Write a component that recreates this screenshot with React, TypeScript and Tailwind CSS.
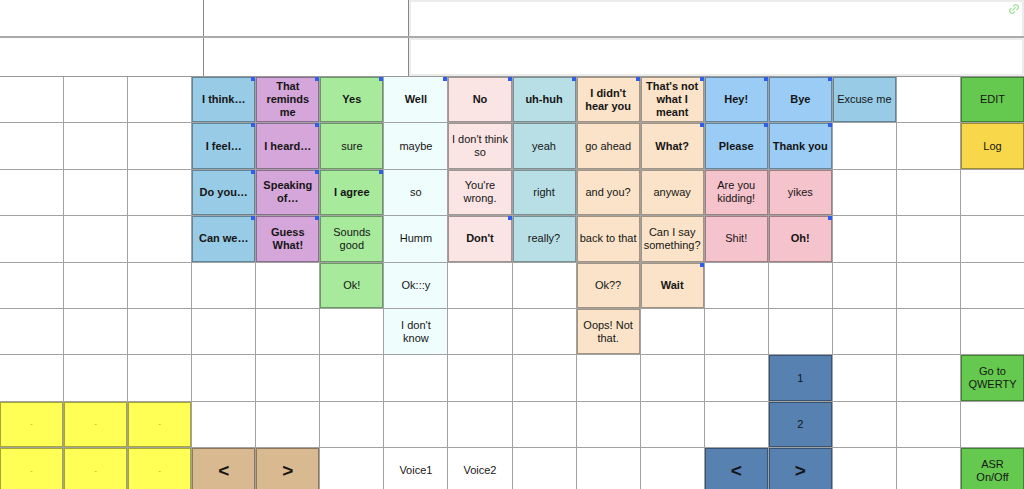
import { Link2 } from "lucide-react";

type Cell = { t: string; c: string; b?: boolean; big?: boolean; tiny?: boolean } | null;

// colour classes, written out in full
const BLUE = "bg-[#97cbe6]";
const PURPLE = "bg-[#d5a6da]";
const GREEN = "bg-[#a7ea9b]";
const AZURE = "bg-[#f0fdfd]";
const ROSE = "bg-[#fae4e4]";
const TEAL = "bg-[#b8dfe5]";
const PEACH = "bg-[#fae3c8]";
const SKY = "bg-[#9accf5]";
const PINK = "bg-[#f5c3cb]";
const LIME = "bg-[#66c94f]";
const GOLD = "bg-[#f8d84a]";
const YELLOW = "bg-[#ffff55]";
const TAN = "bg-[#d9b98f]";
const STEEL = "bg-[#5681b0]";
const WHITE = "bg-white";

const _ = null;
const y: Cell = { t: "-", c: YELLOW, tiny: true };

const rows: Cell[][] = [
  [_, _, _,
    { t: "I think…", c: BLUE, b: true },
    { t: "That reminds me", c: PURPLE, b: true },
    { t: "Yes", c: GREEN, b: true },
    { t: "Well", c: AZURE, b: true },
    { t: "No", c: ROSE, b: true },
    { t: "uh-huh", c: TEAL, b: true },
    { t: "I didn't hear you", c: PEACH, b: true },
    { t: "That's not what I meant", c: PEACH, b: true },
    { t: "Hey!", c: SKY, b: true },
    { t: "Bye", c: SKY, b: true },
    { t: "Excuse me", c: BLUE },
    _,
    { t: "EDIT", c: LIME }],
  [_, _, _,
    { t: "I feel…", c: BLUE, b: true },
    { t: "I heard…", c: PURPLE, b: true },
    { t: "sure", c: GREEN },
    { t: "maybe", c: AZURE },
    { t: "I don't think so", c: ROSE },
    { t: "yeah", c: TEAL },
    { t: "go ahead", c: PEACH },
    { t: "What?", c: PEACH, b: true },
    { t: "Please", c: SKY, b: true },
    { t: "Thank you", c: SKY, b: true },
    _, _,
    { t: "Log", c: GOLD }],
  [_, _, _,
    { t: "Do you…", c: BLUE, b: true },
    { t: "Speaking of…", c: PURPLE, b: true },
    { t: "I agree", c: GREEN, b: true },
    { t: "so", c: AZURE },
    { t: "You're wrong.", c: ROSE },
    { t: "right", c: TEAL },
    { t: "and you?", c: PEACH },
    { t: "anyway", c: PEACH },
    { t: "Are you kidding!", c: PINK },
    { t: "yikes", c: PINK },
    _, _, _],
  [_, _, _,
    { t: "Can we…", c: BLUE, b: true },
    { t: "Guess What!", c: PURPLE, b: true },
    { t: "Sounds good", c: GREEN },
    { t: "Humm", c: AZURE },
    { t: "Don't", c: ROSE, b: true },
    { t: "really?", c: TEAL },
    { t: "back to that", c: PEACH },
    { t: "Can I say something?", c: PEACH },
    { t: "Shit!", c: PINK },
    { t: "Oh!", c: PINK, b: true },
    _, _, _],
  [_, _, _, _, _,
    { t: "Ok!", c: GREEN },
    { t: "Ok:::y", c: AZURE },
    _, _,
    { t: "Ok??", c: PEACH },
    { t: "Wait", c: PEACH, b: true },
    _, _, _, _, _],
  [_, _, _, _, _, _,
    { t: "I don't\nknow", c: AZURE },
    _, _,
    { t: "Oops! Not that.", c: PEACH },
    _, _, _, _, _, _],
  [_, _, _, _, _, _, _, _, _, _, _, _,
    { t: "1", c: STEEL },
    _, _,
    { t: "Go to QWERTY", c: LIME }],
  [y, y, y, _, _, _, _, _, _, _, _, _,
    { t: "2", c: STEEL },
    _, _, _],
  [y, y, y,
    { t: "<", c: TAN, big: true },
    { t: ">", c: TAN, big: true },
    _,
    { t: "Voice1", c: WHITE },
    { t: "Voice2", c: WHITE },
    _, _, _,
    { t: "<", c: STEEL, big: true },
    { t: ">", c: STEEL, big: true },
    _, _,
    { t: "ASR\nOn/Off", c: LIME }],
];

function GridCell({ cell }: { cell: Cell }) {
  if (!cell) return <div className="bg-white" />;
  const edged = cell.c !== WHITE && cell.c !== AZURE;
  return (
    <div
      className={`relative flex items-center justify-center whitespace-pre-line px-[2px] text-center text-[#151515] ${cell.c} ${
        edged ? "shadow-[inset_0_0_0_1px_rgba(0,0,0,0.35)]" : ""
      } ${cell.big ? "text-[19px] font-bold leading-none" : cell.tiny ? "text-[7px] text-[#a3a33a]" : "text-[11px] leading-[13px]"} ${
        cell.b ? "font-bold" : ""
      }`}
    >
      {cell.t}
      {cell.b && <span className="absolute right-0 top-0 h-[4px] w-[4px] bg-[#2f5fe9]" />}
    </div>
  );
}

export default function App() {
  return (
    <div className="h-screen overflow-hidden bg-white font-['Liberation_Sans',Arial,sans-serif]">
      {/* Header fields */}
      <div className="flex h-[38px] border-b-2 border-[#aaa]">
        <div className="w-[204px] border-r border-[#888]" />
        <div className="w-[205px] border-r border-[#888]" />
        <div className="relative flex-1 border-2 border-b-0 border-[#ececec]">
          <Link2 className="absolute right-[2px] top-[1px] -rotate-45 text-[#9fe39a]" size={12} strokeWidth={2.5} />
        </div>
      </div>
      <div className="flex h-[39px] border-b border-[#999]">
        <div className="w-[204px] border-r border-[#888]" />
        <div className="w-[205px] border-r border-[#888]" />
        <div className="flex-1 border-2 border-[#ececec]" />
      </div>

      {/* Board */}
      <div className="grid grid-cols-16 auto-rows-[45.4px] gap-px bg-[#a2a2a2]">
        {rows.flatMap((row, r) => row.map((cell, c) => <GridCell key={`${r}-${c}`} cell={cell} />))}
      </div>
    </div>
  );
}
